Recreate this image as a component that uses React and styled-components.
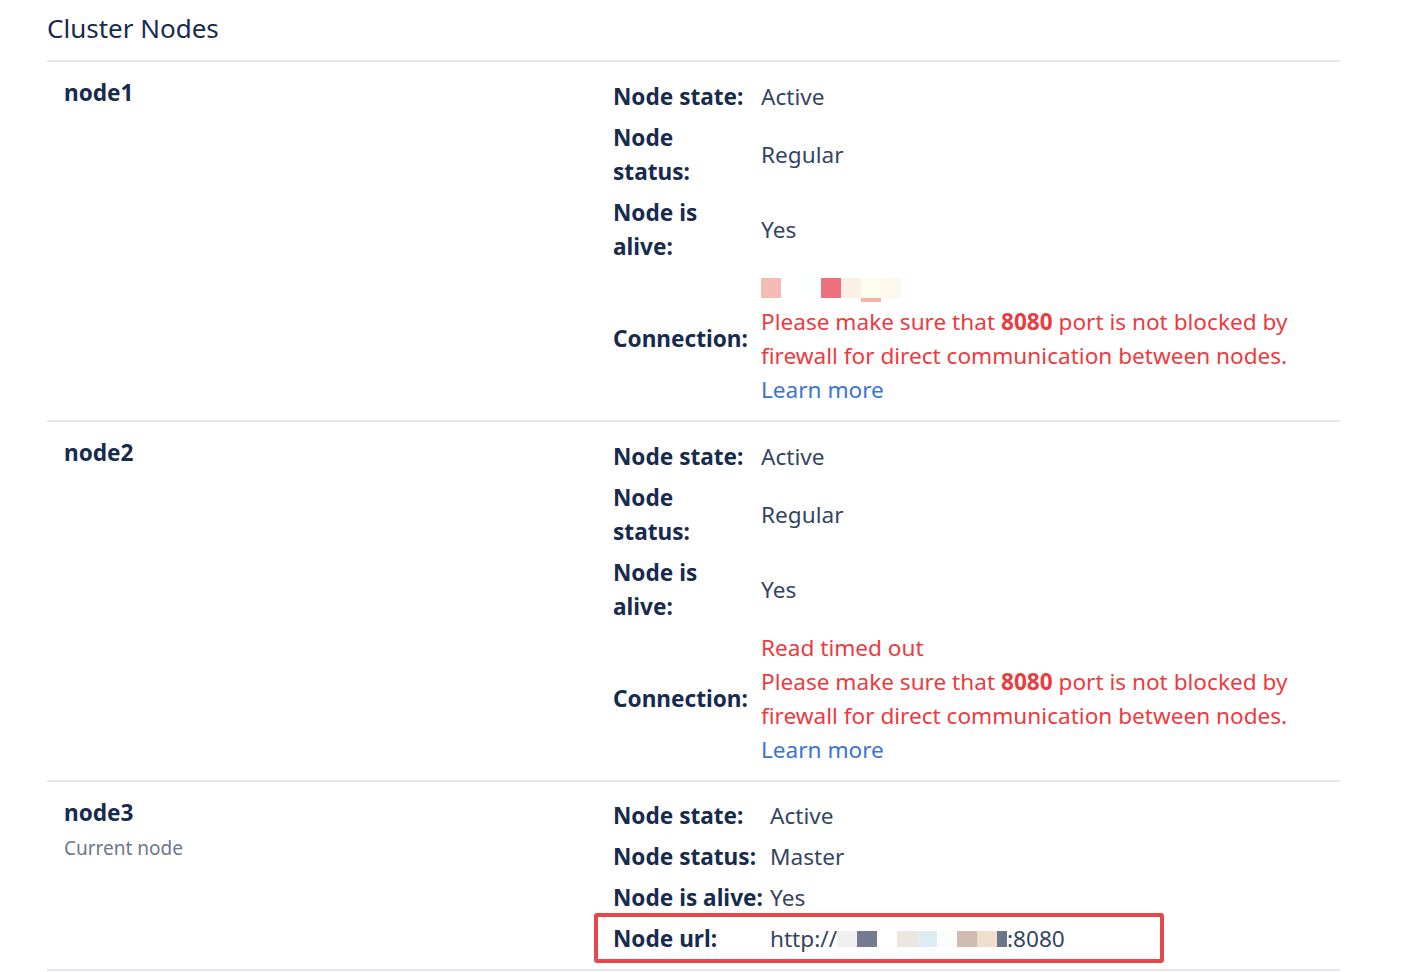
import React from "react";
import styled, {createGlobalStyle} from "styled-components";

const GlobalStyle = createGlobalStyle`
  body {
    margin: 0;
    background: #fff;
    font-family: "Noto Sans", "Open Sans", sans-serif;
    color: #172b4d;
  }
`

const colors = {
    text: "#172b4d",
    value: "#344563",
    subtle: "#6b778c",
    error: "#ec3b3f",
    link: "#3b73d6",
    border: "#e6e7ec",
    highlight: "#e5474c",
}

const nodes = [
    {
        name: "node1",
        rows: [
            {label: "Node state:", value: "Active"},
            {label: "Node status:", value: "Regular"},
            {label: "Node is alive:", value: "Yes"},
        ],
        connection: {
            mosaic: [
                {c: "#f5bcb5"}, {c: "#ffffff"}, {c: "#fdfefe"}, {c: "#ec717d"},
                {c: "#fbefe6"}, {c: "#fffdf0", bar: true}, {c: "#fdf8ec"},
            ],
        },
    },
    {
        name: "node2",
        rows: [
            {label: "Node state:", value: "Active"},
            {label: "Node status:", value: "Regular"},
            {label: "Node is alive:", value: "Yes"},
        ],
        connection: {message: "Read timed out"},
    },
]

const urlMosaic = [
    {c: "#efefef"}, {c: "#747b90"}, {c: "#ffffff"}, {c: "#ebe6de"}, {c: "#deedf2"},
    {c: "#fbfcfc"}, {c: "#d0bcae"}, {c: "#efdecb"}, {c: "#6c768a", w: 10},
]

function Mosaic({cells, h}) {
    return (
        <MosaicStrip $h={h}>
            {cells.map((cell, i) => (
                <MosaicCell key={i} $color={cell.c} $w={cell.w || 20} $bar={cell.bar}/>
            ))}
        </MosaicStrip>
    )
}

function ConnectionValue({connection}) {
    return (
        <ErrorBlock>
            {connection.mosaic
                ? <MosaicLine><Mosaic cells={connection.mosaic} h={20}/></MosaicLine>
                : <div>{connection.message}</div>}
            <div>
                Please make sure that <strong>8080</strong> port is not blocked by firewall for direct communication between nodes.
            </div>
            <div><Link href="#">Learn more</Link></div>
        </ErrorBlock>
    )
}

function NodeSection({node}) {
    return (
        <Section>
            <NodeName>{node.name}</NodeName>
            <Details>
                {node.rows.map(row => (
                    <Row key={row.label}>
                        <Label>{row.label}</Label>
                        <Value>{row.value}</Value>
                    </Row>
                ))}
                <Row>
                    <Label>Connection:</Label>
                    <Value><ConnectionValue connection={node.connection}/></Value>
                </Row>
            </Details>
        </Section>
    )
}

export default function App() {
    return (
        <>
            <GlobalStyle/>
            <Page>
                <Title>Cluster Nodes</Title>
                {nodes.map(node => <NodeSection key={node.name} node={node}/>)}
                <Section $last>
                    <div>
                        <NodeName>node3</NodeName>
                        <Caption>Current node</Caption>
                    </div>
                    <Details $tight>
                        <Row>
                            <Label $wide>Node state:</Label>
                            <Value>Active</Value>
                        </Row>
                        <Row>
                            <Label $wide>Node status:</Label>
                            <Value>Master</Value>
                        </Row>
                        <Row>
                            <Label $wide>Node is alive:</Label>
                            <Value>Yes</Value>
                        </Row>
                        <HighlightRow>
                            <Label $wide>Node url:</Label>
                            <Value>http://<Mosaic cells={urlMosaic} h={16}/>:8080</Value>
                        </HighlightRow>
                    </Details>
                </Section>
            </Page>
        </>
    )
}

const Page = styled.div`
  width: 1293px;
  margin-left: 47px;
`

const Title = styled.h2`
  margin: 0;
  height: 60px;
  line-height: 56px;
  font-size: 26px;
  font-weight: 400;
  color: ${colors.text};
  border-bottom: 2px solid ${colors.border};
`

const Section = styled.div`
  display: grid;
  grid-template-columns: 549px 1fr;
  padding: 14px 0 ${p => p.$last ? 13 : 13}px 17px;
  border-bottom: 2px solid ${colors.border};
`

const NodeName = styled.div`
  font-size: 22.6px;
  font-weight: 700;
  line-height: 34px;
  color: ${colors.text};
`

const Caption = styled.div`
  font-size: 19px;
  line-height: 36px;
  color: ${colors.subtle};
`

const Details = styled.div`
  display: flex;
  flex-direction: column;
  gap: 7px;
  padding-top: ${p => p.$tight ? 3 : 4}px;
`

const Row = styled.div`
  display: flex;
  align-items: center;
  font-size: 22.6px;
  line-height: 34px;
`

const HighlightRow = styled(Row)`
  position: relative;

  &::after {
    content: "";
    position: absolute;
    left: -19px;
    top: -9px;
    width: 570px;
    height: 50px;
    box-sizing: border-box;
    border: 4px solid ${colors.highlight};
    border-radius: 3px;
    pointer-events: none;
  }
`

const Label = styled.div`
  flex: 0 0 ${p => p.$wide ? 157 : 148}px;
  box-sizing: border-box;
  padding-right: ${p => p.$wide ? 0 : 10}px;
  font-weight: 700;
  color: ${colors.text};
`

const Value = styled.div`
  flex: 1;
  color: ${colors.value};
`

const ErrorBlock = styled.div`
  color: ${colors.error};
  max-width: 545px;

  strong {
    font-weight: 700;
  }
`

const MosaicLine = styled.div`
  height: 34px;
  display: flex;
  align-items: center;
`

const Link = styled.a`
  color: ${colors.link};
  text-decoration: none;
`

const MosaicStrip = styled.span`
  display: inline-flex;
  height: ${p => p.$h}px;
  vertical-align: ${p => p.$h === 20 ? "-2px" : "0px"};
`

const MosaicCell = styled.span`
  position: relative;
  width: ${p => p.$w}px;
  height: 100%;
  background: ${p => p.$color};

  &::after {
    content: "";
    display: ${p => p.$bar ? "block" : "none"};
    position: absolute;
    left: 0;
    right: 0;
    bottom: -4px;
    height: 4px;
    background: #f5b2a7;
  }
`
